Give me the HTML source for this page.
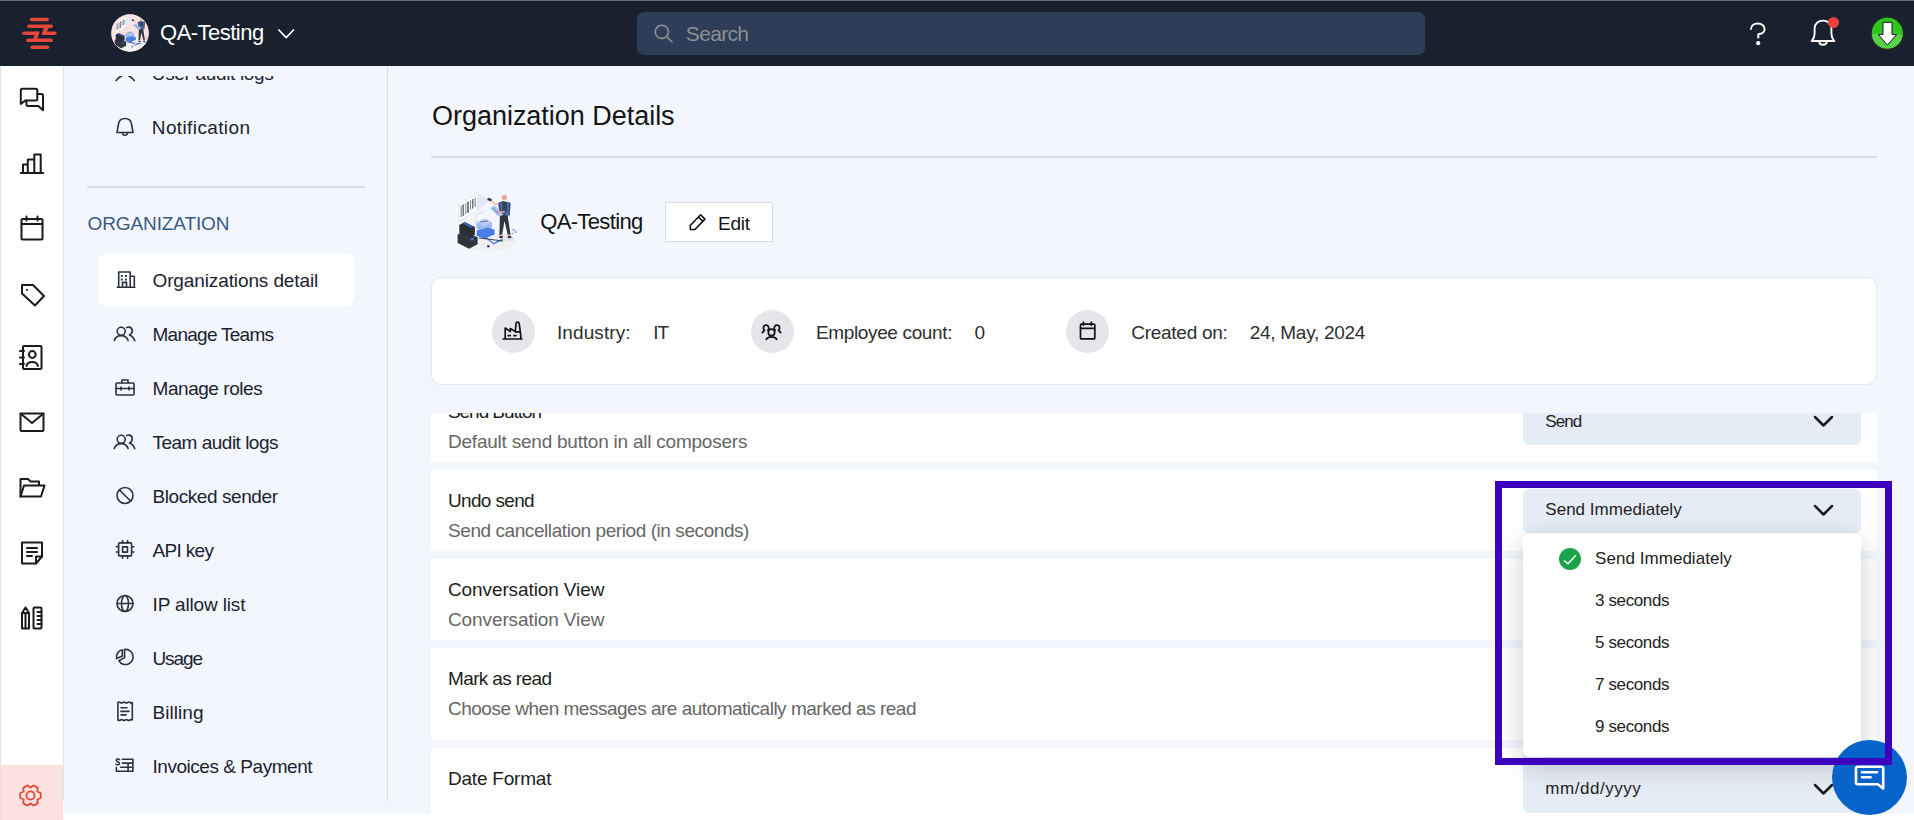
<!DOCTYPE html>
<html><head><meta charset="utf-8"><style>
html,body{margin:0;padding:0;width:1914px;height:820px;overflow:hidden;background:#fff;font-family:"Liberation Sans",sans-serif;}
.t{position:absolute;white-space:nowrap;}
svg{display:block}
</style></head><body>
<div style="position:absolute;left:0;top:0;width:1914px;height:1px;background:#6a6d72"></div>
<div style="position:absolute;left:0;top:1px;width:1914px;height:65px;background:#19212e"></div>
<svg style="position:absolute;left:0;top:0" width="80" height="66" viewBox="0 0 80 66">
<g stroke="#e5483b" stroke-width="3.4" stroke-linecap="round" fill="none">
<line x1="31.5" y1="19.5" x2="47.3" y2="19.5"/>
<line x1="28.8" y1="26.2" x2="51.2" y2="26.2"/>
<line x1="23.9" y1="33.2" x2="37.5" y2="33.2"/>
<line x1="43.5" y1="33.2" x2="54.8" y2="33.2"/>
<line x1="27.9" y1="40.2" x2="51.2" y2="40.2"/>
<line x1="32.2" y1="47.2" x2="47.5" y2="47.2"/>
</g>
<g fill="#e5483b">
<polygon points="44.5,26 49.5,26 45.5,34.9 41.6,34.9"/>
<polygon points="35.5,31.5 39.5,31.5 36.4,41.9 32.3,41.9"/>
</g>
</svg>
<svg style="position:absolute;left:110.5px;top:14.2px" width="38" height="38" viewBox="0 0 38 38">
<defs><clipPath id="ac"><circle cx="19" cy="19" r="18.5"/></clipPath></defs>
<circle cx="19" cy="19" r="18.8" fill="#f6e6e6"/>
<g clip-path="url(#ac)">
<rect width="38" height="38" fill="#fbe2e3"/>
<polygon points="0,30 22,23 38,27 38,38 0,38" fill="#f3f3f5"/>
<g transform="translate(-0.6 -2.1) scale(0.57)">
<ellipse cx="38" cy="57" rx="28" ry="9.5" fill="#eef0f3"/>
<ellipse cx="57" cy="53.5" rx="7" ry="3" fill="#e2e4e8"/>
<polygon points="8.9,19.1 27.6,8.5 27.6,25.8 8.9,36.5" fill="#fff" stroke="#d8dadf" stroke-width="0.6"/>
<g stroke="#707377">
<line x1="11.2" y1="20.5" x2="11.2" y2="32" stroke-width="1"/>
<line x1="13.3" y1="19.3" x2="13.3" y2="30.8" stroke-width="1.6"/>
<line x1="15.8" y1="17.9" x2="15.8" y2="29.4" stroke-width="0.8"/>
<line x1="18" y1="16.6" x2="18" y2="28.1" stroke-width="1.8"/>
<line x1="20.6" y1="15.2" x2="20.6" y2="24.7" stroke-width="0.9"/>
<line x1="22.8" y1="13.9" x2="22.8" y2="23.4" stroke-width="1.5"/>
<line x1="25.2" y1="12.5" x2="25.2" y2="22" stroke-width="1"/>
</g>
<polygon points="27.6,8.5 39.2,14.7 27.6,25.8" fill="#dfe7f8"/>
<polygon points="7.6,49.4 11.6,47.2 27.6,52.1 27.6,59.2 19.1,63.7 7.6,57.9" fill="#30363e"/>
<polygon points="9.3,40.1 14.7,37 24.9,41.9 24.9,49.9 19.6,52.5 9.3,48.1" fill="#2a3038"/>
<polygon points="13,38.6 14.7,37.6 23,41.8 21.3,42.8" fill="#3b6fdc"/>
<polygon points="20.5,54 24,52.5 24,54.5 20.5,56" fill="#3b6fdc"/>
<path d="M26 44 V30 L33.5 27" fill="none" stroke="#c9ccd2" stroke-width="0.6"/>
<polygon points="26.7,37.4 34.7,33.4 41.9,37.4 41.9,43.6 33.8,47.6 26.7,43.6" fill="#9db8f2"/>
<polygon points="26.7,37.4 34.7,33.4 41.9,37.4 33.8,41.4" fill="#bccdf5"/>
<line x1="30" y1="37" x2="38" y2="36" stroke="#4a5362" stroke-width="0.7"/>
<polygon points="26.7,45.4 37.4,42.7 44.5,44.5 44.5,49.9 35.6,54.3 26.7,50.8" fill="#4a7de8"/>
<polygon points="37,52.5 46.3,49 52.5,53.4 43.6,57.9" fill="#fbfbfd"/>
<g fill="#dfe6f5"><circle cx="41" cy="53" r="1.3"/><circle cx="44.5" cy="51.6" r="1.3"/><circle cx="48" cy="50.5" r="1.3"/><circle cx="43.8" cy="55" r="1.3"/><circle cx="47.2" cy="53.6" r="1.3"/></g>
<polygon points="37,52.5 43.6,57.9 52.5,53.4 52.5,55 43.6,59.5 37,54.1" fill="#3b6fdc"/>
<line x1="29" y1="53" x2="53" y2="56" stroke="#30363e" stroke-width="0.9"/>
<circle cx="38.3" cy="61.2" r="1.2" fill="#30363e"/>
<polygon points="49.9,30.3 57.5,30 60.6,49.9 57.9,50.3 54.5,36 52,50.2 49.4,50" fill="#30363e"/>
<ellipse cx="51" cy="52" rx="2" ry="1.2" fill="#30363e"/><ellipse cx="59.5" cy="52" rx="2" ry="1.2" fill="#30363e"/>
<rect x="50.6" y="49.5" width="1.8" height="1.5" fill="#f2a89c"/><rect x="58.2" y="49.5" width="1.8" height="1.5" fill="#f2a89c"/>
<polygon points="48.1,17.8 53.4,16 60.6,17.8 59.7,30.4 49.9,30.8" fill="#3d434b"/>
<polygon points="50.2,17.2 52,16.5 52.5,29.5 50.8,29.8" fill="#3b6fdc"/>
<polygon points="57.2,16.8 59,17.4 58.5,30 56.8,30.2" fill="#3b6fdc"/>
<rect x="55" y="27.5" width="4" height="2.5" fill="#3b6fdc"/>
<circle cx="54.3" cy="12.6" r="2.6" fill="#f2a89c"/>
<path d="M51.8 11.8 C52 9.3 56.2 9 56.8 11.2 L55.5 10.8 Z" fill="#f2a89c"/>
<path d="M40 15.5 L46 19.5 L49 18.5" fill="none" stroke="#f2a89c" stroke-width="1.4"/>
<ellipse cx="39.6" cy="14.5" rx="2.4" ry="1.4" fill="#30363e" transform="rotate(15 39.6 14.5)"/>
<polygon points="40.1,23.2 44.5,20.5 53.4,29.4 49,32.1" fill="#a9c1f4"/>
<line x1="42.5" y1="23" x2="49" y2="29" stroke="#4a5362" stroke-width="0.6"/>
<path d="M48 28 L55 26.5" fill="none" stroke="#f2a89c" stroke-width="1.4"/>
<g fill="#5d8ae8"><circle cx="63.5" cy="45" r="0.9"/><circle cx="65.5" cy="47" r="0.9"/><circle cx="62.5" cy="48.5" r="0.7"/></g>
</g>
</g></svg>
<div class="t" style="left:160.10px;top:22.38px;font-size:22px;line-height:22px;letter-spacing:-0.533px;color:#ffffff;">QA-Testing</div>
<svg style="position:absolute;left:276px;top:27px" width="21" height="14" viewBox="0 0 21 14"><polyline points="2.9,3 10.2,10.6 17.5,3" fill="none" stroke="#fff" stroke-width="1.7" stroke-linecap="round" stroke-linejoin="round"/></svg>
<div style="position:absolute;left:637px;top:12px;width:788px;height:43px;background:#2d3e56;border-radius:7px"></div>
<svg style="position:absolute;left:650px;top:20px" width="28" height="28" viewBox="0 0 28 28"><circle cx="11.8" cy="11.8" r="6.6" fill="none" stroke="#8b9097" stroke-width="1.6"/><line x1="16.6" y1="16.6" x2="22" y2="22" stroke="#8b9097" stroke-width="1.6" stroke-linecap="round"/></svg>
<div class="t" style="left:685.80px;top:23.32px;font-size:21px;line-height:21px;letter-spacing:-0.660px;color:#8b9097;">Search</div>
<svg style="position:absolute;left:1740px;top:14px" width="36" height="36" viewBox="0 0 36 36">
<path d="M11 15.1 C11 11.5 14 9.5 17.8 9.5 C21.6 9.5 24.6 11.8 24.6 15 C24.6 18.5 21.8 19.9 18.3 20.3 V23.4" fill="none" stroke="#fff" stroke-width="2" stroke-linecap="round" stroke-linejoin="round"/>
<circle cx="18.2" cy="29.2" r="2.1" fill="#fff"/></svg>
<svg style="position:absolute;left:1806px;top:14px" width="36" height="36" viewBox="0 0 36 36">
<path d="M5.7 27 C6.8 25.6 8.6 23.6 8.6 19.5 V14.5 C8.6 9.6 12.4 6.6 17 6.6 C21.6 6.6 25.4 9.6 25.4 14.5 V19.5 C25.4 23.6 27.2 25.6 28.3 27 Z" fill="none" stroke="#fff" stroke-width="1.9" stroke-linejoin="round"/>
<path d="M13.2 27.6 C13.4 31.8 20.6 31.8 20.8 27.6" fill="none" stroke="#fff" stroke-width="1.9"/>
</svg>
<div style="position:absolute;left:1828.1px;top:16.8px;width:11.2px;height:11.2px;border-radius:50%;background:#ea4040"></div>
<svg style="position:absolute;left:1870px;top:16px" width="35" height="35" viewBox="0 0 35 35">
<defs><clipPath id="dc"><circle cx="17.3" cy="17.2" r="16"/></clipPath></defs>
<circle cx="17.3" cy="17.2" r="16" fill="#2fc41f"/>
<path d="M0 19.5 Q17 13 35 20 V35 H0 Z" fill="#58d04a" clip-path="url(#dc)"/>
<circle cx="17.3" cy="17.2" r="16.2" fill="none" stroke="#1b1b1b" stroke-width="1.1"/>
<circle cx="17.3" cy="17.2" r="16.6" fill="none" stroke="#6b6060" stroke-width="0.5" stroke-dasharray="1 1.5"/>
<polygon points="13,6.3 22,6.3 22,18.4 26.7,18.4 17.4,29 8.2,18.4 13,18.4" fill="#fff" stroke="#151515" stroke-width="1"/>
</svg>
<div style="position:absolute;left:0;top:66px;width:64px;height:754px;background:#fff"></div>
<div style="position:absolute;left:0;top:66px;width:1px;height:754px;background:#dfe2e6"></div>
<div style="position:absolute;left:63px;top:66px;width:1px;height:735px;background:#dbe2ec"></div>
<div style="position:absolute;left:1px;top:765px;width:62px;height:55px;background:#fbe1df"></div>
<svg style="position:absolute;left:18px;top:85px" width="28" height="28" viewBox="0 0 28 28"><path d="M2.8 18.9 V5.3 Q2.8 3.8 4.3 3.8 H17.8 Q19.3 3.8 19.3 5.3 V13.9 Q19.3 15.4 17.8 15.4 H7.6 Z" fill="none" stroke="#1b1b1b" stroke-width="2" stroke-linejoin="round" stroke-linecap="round"/><path d="M19.3 9 H23.5 Q25 9 25 10.5 V25.3 L20.4 21.1 H10 Q8.5 21.1 8.5 19.6 V15.4" fill="none" stroke="#1b1b1b" stroke-width="2" stroke-linejoin="round" stroke-linecap="round"/></svg>
<svg style="position:absolute;left:18px;top:150px" width="28" height="26" viewBox="0 0 28 26"><path d="M2.8 23 H25.2 M5 23 V14.6 H9.8 V23 M9.8 23 V9.6 H16.3 V23 M16.3 23 V4.4 H22.7 V23" fill="none" stroke="#1b1b1b" stroke-width="2" stroke-linejoin="round" stroke-linecap="round"/></svg>
<svg style="position:absolute;left:18px;top:214px" width="28" height="28" viewBox="0 0 28 28"><rect x="3.5" y="5" width="21" height="20.5" rx="1" fill="none" stroke="#1b1b1b" stroke-width="2" stroke-linejoin="round" stroke-linecap="round"/><path d="M3.5 10 H24.5 M8.5 2.5 V6.5 M19.5 2.5 V6.5" fill="none" stroke="#1b1b1b" stroke-width="2" stroke-linejoin="round" stroke-linecap="round"/></svg>
<svg style="position:absolute;left:18px;top:281px" width="30" height="28" viewBox="0 0 30 28"><path d="M4 4 H15 L26 15 L17 24.5 L4 12.5 Z" fill="none" stroke="#1b1b1b" stroke-width="2" stroke-linejoin="round" stroke-linecap="round"/><circle cx="9" cy="9" r="1.1" fill="#1b1b1b"/></svg>
<svg style="position:absolute;left:17px;top:343px" width="28" height="29" viewBox="0 0 28 29"><rect x="6" y="3" width="18.5" height="23" rx="1" fill="none" stroke="#1b1b1b" stroke-width="2" stroke-linejoin="round" stroke-linecap="round"/><circle cx="15.3" cy="11.5" r="3.4" fill="none" stroke="#1b1b1b" stroke-width="2" stroke-linejoin="round" stroke-linecap="round"/><path d="M9.5 23 C10.5 17.5 20 17.5 21 23" fill="none" stroke="#1b1b1b" stroke-width="2" stroke-linejoin="round" stroke-linecap="round"/><path d="M3 8 H7 M3 14.5 H7 M3 21 H7" fill="none" stroke="#1b1b1b" stroke-width="2" stroke-linejoin="round" stroke-linecap="round"/></svg>
<svg style="position:absolute;left:17px;top:410px" width="30" height="24" viewBox="0 0 30 24"><rect x="3.5" y="3.5" width="23" height="17.5" rx="1" fill="none" stroke="#1b1b1b" stroke-width="2" stroke-linejoin="round" stroke-linecap="round"/><path d="M3.5 3.5 L15 13 L26.5 3.5" fill="none" stroke="#1b1b1b" stroke-width="2" stroke-linejoin="round" stroke-linecap="round"/></svg>
<svg style="position:absolute;left:17px;top:475px" width="31" height="26" viewBox="0 0 31 26"><path d="M3.5 21.5 V4 H11 L13.5 6.5 H22 V10" fill="none" stroke="#1b1b1b" stroke-width="2" stroke-linejoin="round" stroke-linecap="round"/><path d="M3.5 21.5 L7 10.5 H27.5 L24 21.5 Z" fill="none" stroke="#1b1b1b" stroke-width="2" stroke-linejoin="round" stroke-linecap="round"/></svg>
<svg style="position:absolute;left:18px;top:539px" width="28" height="28" viewBox="0 0 28 28"><path d="M4 3.5 H24 V17.5 L18 24.5 H4 Z" fill="none" stroke="#1b1b1b" stroke-width="2" stroke-linejoin="round" stroke-linecap="round"/><path d="M18 24.5 V17.5 H24" fill="none" stroke="#1b1b1b" stroke-width="2" stroke-linejoin="round" stroke-linecap="round"/><path d="M9 9 H19 M9 13 H19 M9 17 H14" fill="none" stroke="#1b1b1b" stroke-width="2" stroke-linejoin="round" stroke-linecap="round"/></svg>
<svg style="position:absolute;left:18px;top:604px" width="28" height="28" viewBox="0 0 28 28"><path d="M4 9 L7.5 3.5 L11 9 V24.5 H4 Z M4 9 H11 M7.5 9 V24.5" fill="none" stroke="#1b1b1b" stroke-width="2" stroke-linejoin="round" stroke-linecap="round"/><rect x="15.5" y="3.5" width="8" height="21" rx="1" fill="none" stroke="#1b1b1b" stroke-width="2" stroke-linejoin="round" stroke-linecap="round"/><path d="M19.5 8 H23.5 M19.5 12 H23.5 M19.5 16 H23.5 M19.5 20 H23.5" fill="none" stroke="#1b1b1b" stroke-width="2" stroke-linejoin="round" stroke-linecap="round"/></svg>
<svg style="position:absolute;left:17px;top:782px" width="28" height="28" viewBox="0 0 28 28"><path d="M23.59 16.02 A10.4 10.4 0 0 0 23.59 10.98 L20.34 9.55 L20.72 6.02 A10.4 10.4 0 0 0 16.37 3.50 L13.50 5.60 L10.63 3.50 A10.4 10.4 0 0 0 6.28 6.02 L6.66 9.55 L3.41 10.98 A10.4 10.4 0 0 0 3.41 16.02 L6.66 17.45 L6.28 20.98 A10.4 10.4 0 0 0 10.63 23.50 L13.50 21.40 L16.37 23.50 A10.4 10.4 0 0 0 20.72 20.98 L20.34 17.45 Z" fill="none" stroke="#e5483b" stroke-width="1.8" stroke-linejoin="round"/><circle cx="13.5" cy="13.5" r="4.1" fill="none" stroke="#e5483b" stroke-width="1.8"/></svg>
<div style="position:absolute;left:64px;top:66px;width:1850px;height:748px;background:#f3f7fd"></div>
<div style="position:absolute;left:64px;top:814px;width:1850px;height:6px;background:#ffffff"></div>
<div style="position:absolute;left:387px;top:66px;width:1px;height:735px;background:#d7e0ec"></div>
<div style="position:absolute;left:64px;top:75.6px;width:323px;height:738px;overflow:hidden">
<div style="position:absolute;left:-64px;top:-75.6px;width:400px;height:900px">
<div class="t" style="left:151.80px;top:64.12px;font-size:19px;line-height:19px;letter-spacing:-0.336px;color:#1c2230;">User audit logs</div>
<svg style="position:absolute;left:112px;top:62px" width="26" height="26" viewBox="0 0 26 26"><path d="M4.2 18.6 C5.5 16.5 7.5 14.8 9.6 14 M16.8 14 C18.9 14.8 20.9 16.5 22.2 18.6" fill="none" stroke="#2a3240" stroke-width="1.6" stroke-linejoin="round" stroke-linecap="round"/></svg>
<svg style="position:absolute;left:112px;top:114px" width="26" height="26" viewBox="0 0 26 26"><path d="M5 18.5 L6.5 10 C7 6.5 9.5 4.5 13 4.5 C16.5 4.5 19 6.5 19.5 10 L21 18.5 Z" fill="none" stroke="#2a3240" stroke-width="1.6" stroke-linejoin="round" stroke-linecap="round"/><path d="M10.5 19 C10.7 22 15.3 22 15.5 19" fill="none" stroke="#2a3240" stroke-width="1.6" stroke-linejoin="round" stroke-linecap="round"/></svg>
<div class="t" style="left:151.80px;top:118.12px;font-size:19px;line-height:19px;letter-spacing:0.382px;color:#1c2230;">Notification</div>
</div></div>
<div style="position:absolute;left:87px;top:186px;width:278px;height:2px;background:#d5dde8"></div>
<div class="t" style="left:87.60px;top:213.92px;font-size:19px;line-height:19px;letter-spacing:-0.127px;color:#3a5a85;">ORGANIZATION</div>
<div style="position:absolute;left:98px;top:254px;width:256px;height:52px;background:#fff;border-radius:8px"></div>
<div class="t" style="left:152.50px;top:271.12px;font-size:19px;line-height:19px;letter-spacing:-0.116px;color:#1c2230;">Organizations detail</div>
<div class="t" style="left:152.50px;top:325.12px;font-size:19px;line-height:19px;letter-spacing:-0.727px;color:#1c2230;">Manage Teams</div>
<div class="t" style="left:152.50px;top:379.12px;font-size:19px;line-height:19px;letter-spacing:-0.445px;color:#1c2230;">Manage roles</div>
<div class="t" style="left:152.50px;top:433.12px;font-size:19px;line-height:19px;letter-spacing:-0.507px;color:#1c2230;">Team audit logs</div>
<div class="t" style="left:152.50px;top:487.12px;font-size:19px;line-height:19px;letter-spacing:-0.423px;color:#1c2230;">Blocked sender</div>
<div class="t" style="left:152.50px;top:541.12px;font-size:19px;line-height:19px;letter-spacing:-0.667px;color:#1c2230;">API key</div>
<div class="t" style="left:152.50px;top:595.12px;font-size:19px;line-height:19px;letter-spacing:-0.142px;color:#1c2230;">IP allow list</div>
<div class="t" style="left:152.50px;top:649.12px;font-size:19px;line-height:19px;letter-spacing:-1.100px;color:#1c2230;">Usage</div>
<div class="t" style="left:152.50px;top:703.12px;font-size:19px;line-height:19px;letter-spacing:0.050px;color:#1c2230;">Billing</div>
<div class="t" style="left:152.50px;top:757.12px;font-size:19px;line-height:19px;letter-spacing:-0.465px;color:#1c2230;">Invoices &amp; Payment</div>
<svg style="position:absolute;left:112px;top:266.2px" width="26" height="26" viewBox="0 0 26 26"><path d="M5.3 21.2 H22.8 M6.7 21.2 V6 H18.2 V21.2 M18.2 10.3 H22.3 V21.2 M10.5 21.2 V16.4 H14.5 V21.2" fill="none" stroke="#2a3240" stroke-width="1.6" stroke-linejoin="round" stroke-linecap="round"/><g fill="#2a3240"><rect x="8.8" y="9" width="1.9" height="1.9"/><rect x="13" y="9" width="1.9" height="1.9"/><rect x="8.8" y="12.6" width="1.9" height="1.9"/><rect x="13" y="12.6" width="1.9" height="1.9"/></g></svg>
<svg style="position:absolute;left:112px;top:320.2px" width="26" height="26" viewBox="0 0 26 26"><circle cx="9.2" cy="11.3" r="4" fill="none" stroke="#2a3240" stroke-width="1.6" stroke-linejoin="round" stroke-linecap="round"/><path d="M2.3 20.6 C3.5 17 6 15.6 9.2 15.6 C12.4 15.6 14.9 17 16.1 20.6" fill="none" stroke="#2a3240" stroke-width="1.6" stroke-linejoin="round" stroke-linecap="round"/><path d="M14.6 7.6 C15.5 7 16.4 6.9 17.3 7.1 C21.2 8 21.2 13.6 17.4 15 C19.6 15.6 21.6 17.6 22.8 20.6" fill="none" stroke="#2a3240" stroke-width="1.6" stroke-linejoin="round" stroke-linecap="round"/></svg>
<svg style="position:absolute;left:112px;top:374.2px" width="26" height="26" viewBox="0 0 26 26"><rect x="4" y="9" width="18" height="12" rx="1" fill="none" stroke="#2a3240" stroke-width="1.6" stroke-linejoin="round" stroke-linecap="round"/><path d="M10 9 V6 H16 V9 M4 14.5 H22 M9 13 V16 M17 13 V16" fill="none" stroke="#2a3240" stroke-width="1.6" stroke-linejoin="round" stroke-linecap="round"/></svg>
<svg style="position:absolute;left:112px;top:428.2px" width="26" height="26" viewBox="0 0 26 26"><circle cx="9.2" cy="11.3" r="4" fill="none" stroke="#2a3240" stroke-width="1.6" stroke-linejoin="round" stroke-linecap="round"/><path d="M2.3 20.6 C3.5 17 6 15.6 9.2 15.6 C12.4 15.6 14.9 17 16.1 20.6" fill="none" stroke="#2a3240" stroke-width="1.6" stroke-linejoin="round" stroke-linecap="round"/><path d="M14.6 7.6 C15.5 7 16.4 6.9 17.3 7.1 C21.2 8 21.2 13.6 17.4 15 C19.6 15.6 21.6 17.6 22.8 20.6" fill="none" stroke="#2a3240" stroke-width="1.6" stroke-linejoin="round" stroke-linecap="round"/></svg>
<svg style="position:absolute;left:112px;top:482.2px" width="26" height="26" viewBox="0 0 26 26"><circle cx="13" cy="13.5" r="8" fill="none" stroke="#2a3240" stroke-width="1.6" stroke-linejoin="round" stroke-linecap="round"/><path d="M7.5 8 L18.5 19" fill="none" stroke="#2a3240" stroke-width="1.6" stroke-linejoin="round" stroke-linecap="round"/></svg>
<svg style="position:absolute;left:112px;top:536.2px" width="26" height="26" viewBox="0 0 26 26"><rect x="6.6" y="6.9" width="13" height="13" rx="1" fill="none" stroke="#2a3240" stroke-width="1.6" stroke-linejoin="round" stroke-linecap="round"/><rect x="10.6" y="10.9" width="4.9" height="5.2" fill="none" stroke="#2a3240" stroke-width="1.6" stroke-linejoin="round" stroke-linecap="round"/><path d="M10.5 4.6 V6.9 M15.6 4.6 V6.9 M10.5 19.9 V22.2 M15.6 19.9 V22.2 M4.3 10.8 H6.6 M4.3 16 H6.6 M19.6 10.8 H21.9 M19.6 16 H21.9" fill="none" stroke="#2a3240" stroke-width="1.6" stroke-linejoin="round" stroke-linecap="round"/></svg>
<svg style="position:absolute;left:112px;top:590.2px" width="26" height="26" viewBox="0 0 26 26"><circle cx="13" cy="13.5" r="8" fill="none" stroke="#2a3240" stroke-width="1.6" stroke-linejoin="round" stroke-linecap="round"/><ellipse cx="13" cy="13.5" rx="3.5" ry="8" fill="none" stroke="#2a3240" stroke-width="1.6" stroke-linejoin="round" stroke-linecap="round"/><path d="M5 13.5 H21" fill="none" stroke="#2a3240" stroke-width="1.6" stroke-linejoin="round" stroke-linecap="round"/></svg>
<svg style="position:absolute;left:112px;top:644.2px" width="26" height="26" viewBox="0 0 26 26"><path d="M12.6 5.4 A7.6 7.6 0 1 1 6.9 16.8 L12.6 13.6 Z" fill="none" stroke="#2a3240" stroke-width="1.6" stroke-linejoin="round" stroke-linecap="round"/><path d="M10.3 5.8 V12 L4.6 14.6 A7.4 7.4 0 0 1 10.3 5.8 Z" fill="none" stroke="#2a3240" stroke-width="1.6" stroke-linejoin="round" stroke-linecap="round"/></svg>
<svg style="position:absolute;left:112px;top:698.2px" width="26" height="26" viewBox="0 0 26 26"><path d="M5.9 4.5 Q7.1 3.6 8.3 4.5 Q9.5 5.4 10.7 4.5 Q11.9 3.6 13.1 4.5 Q14.3 5.4 15.5 4.5 Q16.7 3.6 17.9 4.5 Q19.1 5.4 20.3 4.5 V22 Q19.1 21.1 17.9 22 Q16.7 22.9 15.5 22 Q14.3 21.1 13.1 22 Q11.9 22.9 10.7 22 Q9.5 21.1 8.3 22 Q7.1 22.9 5.9 22 Z" fill="none" stroke="#2a3240" stroke-width="1.6" stroke-linejoin="round" stroke-linecap="round"/><path d="M9 9.8 H15 M9 13.4 H17 M9 16.9 H14" fill="none" stroke="#2a3240" stroke-width="1.6" stroke-linejoin="round" stroke-linecap="round"/></svg>
<svg style="position:absolute;left:112px;top:752.2px" width="26" height="26" viewBox="0 0 26 26"><path d="M10.3 7.3 H20.9 V19.2 H4.4 V15.6 M10.4 11.1 H20.9 M8.6 15.2 H20.9 M16.1 11.1 V19.2" fill="none" stroke="#2a3240" stroke-width="1.6" stroke-linejoin="round" stroke-linecap="round"/><path d="M7.5 7.7 C7 6.7 4.3 6.5 4.2 8.3 C4.1 10.1 7.5 9.5 7.5 11.3 C7.5 13.1 4.6 13 3.9 12.1" fill="none" stroke="#2a3240" stroke-width="1.5" stroke-linecap="round"/></svg>
<div class="t" style="left:432.00px;top:103.44px;font-size:27px;line-height:27px;letter-spacing:-0.026px;color:#141414;">Organization Details</div>
<div style="position:absolute;left:431px;top:156px;width:1446px;height:2px;background:#d3deea"></div>
<svg style="position:absolute;left:450px;top:185px" width="75" height="73" viewBox="0 0 75 73">
<ellipse cx="38" cy="57" rx="28" ry="9.5" fill="#eef0f3"/>
<ellipse cx="57" cy="53.5" rx="7" ry="3" fill="#e2e4e8"/>
<polygon points="8.9,19.1 27.6,8.5 27.6,25.8 8.9,36.5" fill="#fff" stroke="#d8dadf" stroke-width="0.6"/>
<g stroke="#707377">
<line x1="11.2" y1="20.5" x2="11.2" y2="32" stroke-width="1"/>
<line x1="13.3" y1="19.3" x2="13.3" y2="30.8" stroke-width="1.6"/>
<line x1="15.8" y1="17.9" x2="15.8" y2="29.4" stroke-width="0.8"/>
<line x1="18" y1="16.6" x2="18" y2="28.1" stroke-width="1.8"/>
<line x1="20.6" y1="15.2" x2="20.6" y2="24.7" stroke-width="0.9"/>
<line x1="22.8" y1="13.9" x2="22.8" y2="23.4" stroke-width="1.5"/>
<line x1="25.2" y1="12.5" x2="25.2" y2="22" stroke-width="1"/>
</g>
<polygon points="27.6,8.5 39.2,14.7 27.6,25.8" fill="#dfe7f8"/>
<polygon points="7.6,49.4 11.6,47.2 27.6,52.1 27.6,59.2 19.1,63.7 7.6,57.9" fill="#30363e"/>
<polygon points="9.3,40.1 14.7,37 24.9,41.9 24.9,49.9 19.6,52.5 9.3,48.1" fill="#2a3038"/>
<polygon points="13,38.6 14.7,37.6 23,41.8 21.3,42.8" fill="#3b6fdc"/>
<polygon points="20.5,54 24,52.5 24,54.5 20.5,56" fill="#3b6fdc"/>
<path d="M26 44 V30 L33.5 27" fill="none" stroke="#c9ccd2" stroke-width="0.6"/>
<polygon points="26.7,37.4 34.7,33.4 41.9,37.4 41.9,43.6 33.8,47.6 26.7,43.6" fill="#9db8f2"/>
<polygon points="26.7,37.4 34.7,33.4 41.9,37.4 33.8,41.4" fill="#bccdf5"/>
<line x1="30" y1="37" x2="38" y2="36" stroke="#4a5362" stroke-width="0.7"/>
<polygon points="26.7,45.4 37.4,42.7 44.5,44.5 44.5,49.9 35.6,54.3 26.7,50.8" fill="#4a7de8"/>
<polygon points="37,52.5 46.3,49 52.5,53.4 43.6,57.9" fill="#fbfbfd"/>
<g fill="#dfe6f5"><circle cx="41" cy="53" r="1.3"/><circle cx="44.5" cy="51.6" r="1.3"/><circle cx="48" cy="50.5" r="1.3"/><circle cx="43.8" cy="55" r="1.3"/><circle cx="47.2" cy="53.6" r="1.3"/></g>
<polygon points="37,52.5 43.6,57.9 52.5,53.4 52.5,55 43.6,59.5 37,54.1" fill="#3b6fdc"/>
<line x1="29" y1="53" x2="53" y2="56" stroke="#30363e" stroke-width="0.9"/>
<circle cx="38.3" cy="61.2" r="1.2" fill="#30363e"/>
<polygon points="49.9,30.3 57.5,30 60.6,49.9 57.9,50.3 54.5,36 52,50.2 49.4,50" fill="#30363e"/>
<ellipse cx="51" cy="52" rx="2" ry="1.2" fill="#30363e"/><ellipse cx="59.5" cy="52" rx="2" ry="1.2" fill="#30363e"/>
<rect x="50.6" y="49.5" width="1.8" height="1.5" fill="#f2a89c"/><rect x="58.2" y="49.5" width="1.8" height="1.5" fill="#f2a89c"/>
<polygon points="48.1,17.8 53.4,16 60.6,17.8 59.7,30.4 49.9,30.8" fill="#3d434b"/>
<polygon points="50.2,17.2 52,16.5 52.5,29.5 50.8,29.8" fill="#3b6fdc"/>
<polygon points="57.2,16.8 59,17.4 58.5,30 56.8,30.2" fill="#3b6fdc"/>
<rect x="55" y="27.5" width="4" height="2.5" fill="#3b6fdc"/>
<circle cx="54.3" cy="12.6" r="2.6" fill="#f2a89c"/>
<path d="M51.8 11.8 C52 9.3 56.2 9 56.8 11.2 L55.5 10.8 Z" fill="#f2a89c"/>
<path d="M40 15.5 L46 19.5 L49 18.5" fill="none" stroke="#f2a89c" stroke-width="1.4"/>
<ellipse cx="39.6" cy="14.5" rx="2.4" ry="1.4" fill="#30363e" transform="rotate(15 39.6 14.5)"/>
<polygon points="40.1,23.2 44.5,20.5 53.4,29.4 49,32.1" fill="#a9c1f4"/>
<line x1="42.5" y1="23" x2="49" y2="29" stroke="#4a5362" stroke-width="0.6"/>
<path d="M48 28 L55 26.5" fill="none" stroke="#f2a89c" stroke-width="1.4"/>
<g fill="#5d8ae8"><circle cx="63.5" cy="45" r="0.9"/><circle cx="65.5" cy="47" r="0.9"/><circle cx="62.5" cy="48.5" r="0.7"/></g>
</svg>
<div class="t" style="left:540.20px;top:211.38px;font-size:22px;line-height:22px;letter-spacing:-0.644px;color:#141414;">QA-Testing</div>
<div style="position:absolute;left:665px;top:202px;width:106px;height:37.6px;background:#fff;border:1px solid #d3dde9"></div>
<svg style="position:absolute;left:686px;top:211px" width="22" height="22" viewBox="0 0 22 22"><path d="M14.6 3.8 L18.9 8.1 L8.9 18.5 H4.3 V14.5 Z M12.5 6 L16.8 10.3" fill="none" stroke="#111" stroke-width="1.6" stroke-linejoin="round"/></svg>
<div class="t" style="left:718.00px;top:213.92px;font-size:19px;line-height:19px;letter-spacing:-0.233px;color:#141414;">Edit</div>
<div style="position:absolute;left:431px;top:276.5px;width:1444px;height:106.5px;background:#fff;border:1px solid #e3e8f0;border-radius:10px"></div>
<div style="position:absolute;left:492.1px;top:310px;width:42.8px;height:42.8px;border-radius:50%;background:#e4e6ea"></div>
<div style="position:absolute;left:751px;top:310px;width:42.8px;height:42.8px;border-radius:50%;background:#e4e6ea"></div>
<div style="position:absolute;left:1066px;top:310px;width:42.8px;height:42.8px;border-radius:50%;background:#e4e6ea"></div>
<svg style="position:absolute;left:500.3px;top:318.2px" width="26" height="26" viewBox="0 0 26 26"><path d="M3.2 21 H21.8 M5.2 21 V10 L10.3 13.5 V10.5 L15.3 13.6 L16 5.6 C16.3 3.5 18.9 3.5 19.2 5.6 L20.3 13.8 L21 21 M15.3 13.8 H20.3" fill="none" stroke="#111" stroke-width="1.7" stroke-linejoin="round" stroke-linecap="round"/><path d="M8.2 17.6 H10.3 M13.9 17.6 H16" fill="none" stroke="#111" stroke-width="1.7" stroke-linejoin="round" stroke-linecap="round"/></svg>
<svg style="position:absolute;left:759.2px;top:318.2px" width="26" height="26" viewBox="0 0 26 26"><circle cx="12.5" cy="14.4" r="3.2" fill="none" stroke="#111" stroke-width="1.7" stroke-linejoin="round" stroke-linecap="round"/><path d="M7.3 21.3 C8.5 19.6 10 18.9 12.5 18.9 C15 18.9 16.5 19.6 17.7 21.3" fill="none" stroke="#111" stroke-width="1.7" stroke-linejoin="round" stroke-linecap="round"/><path d="M8.9 12.1 C10.5 10.5 9.6 7.2 7 7.2 C4.2 7.2 3.6 11 5.6 12.4 L3.3 14.6 M16.1 12.1 C14.5 10.5 15.4 7.2 18 7.2 C20.8 7.2 21.4 11 19.4 12.4 L21.7 14.6" fill="none" stroke="#111" stroke-width="1.7" stroke-linejoin="round" stroke-linecap="round"/></svg>
<svg style="position:absolute;left:1074.2px;top:318.2px" width="26" height="26" viewBox="0 0 26 26"><rect x="6.5" y="6.2" width="14.3" height="14.7" rx="1" fill="none" stroke="#111" stroke-width="1.7" stroke-linejoin="round" stroke-linecap="round"/><path d="M6.5 10.3 H20.8 M9.4 4.2 V7.2 M17.3 4.2 V7.2" fill="none" stroke="#111" stroke-width="1.7" stroke-linejoin="round" stroke-linecap="round"/></svg>
<div class="t" style="left:557.00px;top:323.32px;font-size:19px;line-height:19px;letter-spacing:0.087px;color:#2e2e2e;">Industry:</div>
<div class="t" style="left:653.30px;top:323.32px;font-size:19px;line-height:19px;letter-spacing:-1.200px;color:#2e2e2e;">IT</div>
<div class="t" style="left:816.00px;top:323.32px;font-size:19px;line-height:19px;letter-spacing:-0.364px;color:#2e2e2e;">Employee count:</div>
<div class="t" style="left:974.50px;top:323.32px;font-size:19px;line-height:19px;letter-spacing:0.000px;color:#2e2e2e;">0</div>
<div class="t" style="left:1131.30px;top:323.32px;font-size:19px;line-height:19px;letter-spacing:-0.280px;color:#2e2e2e;">Created on:</div>
<div class="t" style="left:1249.80px;top:323.32px;font-size:19px;line-height:19px;letter-spacing:-0.292px;color:#2e2e2e;">24, May, 2024</div>
<div style="position:absolute;left:431px;top:413px;width:1446px;height:401px;overflow:hidden">
<div style="position:absolute;left:-431px;top:-413px;width:1914px;height:900px">
<div style="position:absolute;left:431px;top:381px;width:1446px;height:81px;background:#fff"></div>
<div style="position:absolute;left:431px;top:470px;width:1446px;height:81px;background:#fff"></div>
<div style="position:absolute;left:431px;top:559px;width:1446px;height:81px;background:#fff"></div>
<div style="position:absolute;left:431px;top:648px;width:1446px;height:92px;background:#fff"></div>
<div style="position:absolute;left:431px;top:748px;width:1446px;height:82px;background:#fff"></div>
<div class="t" style="left:448.00px;top:402.12px;font-size:19px;line-height:19px;letter-spacing:-1.060px;color:#1e1e1e;">Send Button</div>
<div class="t" style="left:448.00px;top:431.92px;font-size:19px;line-height:19px;letter-spacing:-0.226px;color:#666666;">Default send button in all composers</div>
<div class="t" style="left:448.00px;top:491.12px;font-size:19px;line-height:19px;letter-spacing:-0.663px;color:#1e1e1e;">Undo send</div>
<div class="t" style="left:448.00px;top:520.92px;font-size:19px;line-height:19px;letter-spacing:-0.428px;color:#666666;">Send cancellation period (in seconds)</div>
<div class="t" style="left:448.00px;top:580.12px;font-size:19px;line-height:19px;letter-spacing:-0.106px;color:#1e1e1e;">Conversation View</div>
<div class="t" style="left:448.00px;top:609.92px;font-size:19px;line-height:19px;letter-spacing:-0.106px;color:#666666;">Conversation View</div>
<div class="t" style="left:448.00px;top:669.12px;font-size:19px;line-height:19px;letter-spacing:-0.627px;color:#1e1e1e;">Mark as read</div>
<div class="t" style="left:448.00px;top:698.92px;font-size:19px;line-height:19px;letter-spacing:-0.496px;color:#666666;">Choose when messages are automatically marked as read</div>
<div class="t" style="left:448.00px;top:769.12px;font-size:19px;line-height:19px;letter-spacing:-0.210px;color:#1e1e1e;">Date Format</div>
<div style="position:absolute;left:1523px;top:401px;width:338px;height:44px;background:#e6ecf5;border-radius:6px"></div>
<div class="t" style="left:1545.30px;top:413.31px;font-size:17px;line-height:17px;letter-spacing:-0.900px;color:#222;">Send</div>
<svg style="position:absolute;left:1812px;top:414px" width="24" height="16" viewBox="0 0 24 16"><polyline points="3,3 11.5,11.5 20,3" fill="none" stroke="#1a1a1a" stroke-width="2.5" stroke-linecap="round" stroke-linejoin="round"/></svg>
<div style="position:absolute;left:1523px;top:489px;width:338px;height:44px;background:#e6ecf5;border-radius:6px"></div>
<div class="t" style="left:1545.30px;top:501.31px;font-size:17px;line-height:17px;letter-spacing:0.020px;color:#222;">Send Immediately</div>
<svg style="position:absolute;left:1812px;top:503px" width="24" height="16" viewBox="0 0 24 16"><polyline points="3,3 11.5,11.5 20,3" fill="none" stroke="#1a1a1a" stroke-width="2.5" stroke-linecap="round" stroke-linejoin="round"/></svg>
<div style="position:absolute;left:1523px;top:740px;width:338px;height:73px;background:#e6ecf5;border-radius:6px"></div>
<div class="t" style="left:1545.30px;top:780.31px;font-size:17px;line-height:17px;letter-spacing:0.533px;color:#222;">mm/dd/yyyy</div>
<svg style="position:absolute;left:1812px;top:782px" width="24" height="16" viewBox="0 0 24 16"><polyline points="3,3 11.5,11.5 20,3" fill="none" stroke="#1a1a1a" stroke-width="2.5" stroke-linecap="round" stroke-linejoin="round"/></svg>
</div></div>
<div style="position:absolute;left:1523px;top:534px;width:338px;height:223px;background:#fff;border-radius:6px;box-shadow:0 8px 28px rgba(0,0,0,0.2)"></div>
<svg style="position:absolute;left:1559px;top:548px" width="22" height="22" viewBox="0 0 22 22"><circle cx="11" cy="11" r="11" fill="#1ca34a"/><polyline points="5,12.5 9,15.8 17,7" fill="none" stroke="#fff" stroke-width="1.3"/></svg>
<div class="t" style="left:1595.10px;top:550.41px;font-size:17px;line-height:17px;letter-spacing:0.040px;color:#222;">Send Immediately</div>
<div class="t" style="left:1595.10px;top:592.41px;font-size:17px;line-height:17px;letter-spacing:-0.387px;color:#222;">3 seconds</div>
<div class="t" style="left:1595.10px;top:634.41px;font-size:17px;line-height:17px;letter-spacing:-0.387px;color:#222;">5 seconds</div>
<div class="t" style="left:1595.10px;top:676.41px;font-size:17px;line-height:17px;letter-spacing:-0.387px;color:#222;">7 seconds</div>
<div class="t" style="left:1595.10px;top:718.41px;font-size:17px;line-height:17px;letter-spacing:-0.387px;color:#222;">9 seconds</div>
<div style="position:absolute;left:1832px;top:739.8px;width:75px;height:75px;border-radius:50%;background:#0563c9"></div>
<svg style="position:absolute;left:1852px;top:762px" width="36" height="32" viewBox="0 0 36 32"><path d="M6 4.8 H29.2 Q31.2 4.8 31.2 6.8 V26.5 L25.8 22.3 H6 Q4 22.3 4 20.3 V6.8 Q4 4.8 6 4.8 Z" fill="none" stroke="#fff" stroke-width="2.6" stroke-linejoin="round"/><path d="M10 10.2 H25 M10 15.2 H18.6" stroke="#fff" stroke-width="2.6" stroke-linecap="round"/></svg>
<div style="position:absolute;left:1495px;top:481px;width:397px;height:284px;box-sizing:border-box;border:7.8px solid #3c00bf"></div>
</body></html>
